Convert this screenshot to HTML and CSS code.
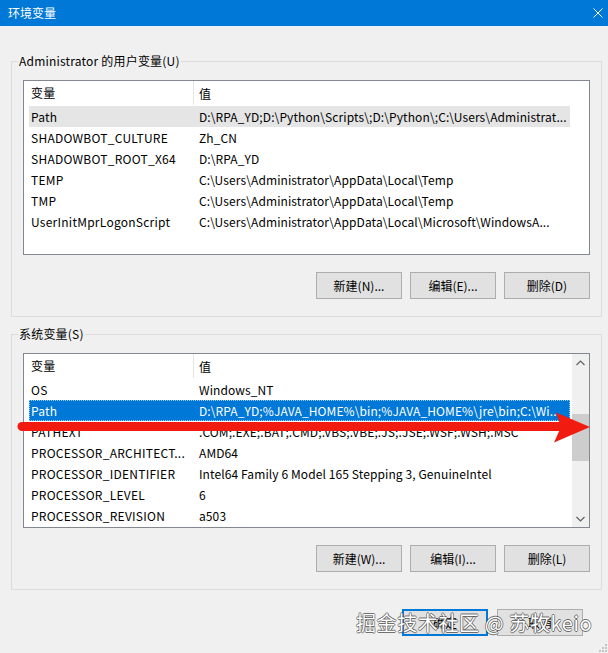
FILE: index.html
```html
<!DOCTYPE html>
<html lang="zh-CN">
<head>
<meta charset="utf-8">
<title>环境变量</title>
<link rel="stylesheet" href="styles.css">
</head>
<body>
<div class="window">
  <div class="titlebar">
    <span class="title">环境变量</span>
    <svg class="close" width="10" height="10" viewBox="0 0 10 10"><path d="M0.5 0.5 L9.5 9.5 M9.5 0.5 L0.5 9.5" stroke="#fff" stroke-width="1" fill="none"/></svg>
  </div>
  <div class="content">
    <fieldset class="group">
      <legend>Administrator 的用户变量(U)</legend>
      <div class="list">
        <div class="list-main">
          <div class="row head"><div class="c1">变量</div><div class="c2">值</div></div>
          <div class="row inactive"><div class="c1">Path</div><div class="c2">D:\RPA_YD;D:\Python\Scripts\;D:\Python\;C:\Users\Administrat...</div></div>
          <div class="row"><div class="c1">SHADOWBOT_CULTURE</div><div class="c2">Zh_CN</div></div>
          <div class="row"><div class="c1">SHADOWBOT_ROOT_X64</div><div class="c2">D:\RPA_YD</div></div>
          <div class="row"><div class="c1">TEMP</div><div class="c2">C:\Users\Administrator\AppData\Local\Temp</div></div>
          <div class="row"><div class="c1">TMP</div><div class="c2">C:\Users\Administrator\AppData\Local\Temp</div></div>
          <div class="row"><div class="c1">UserInitMprLogonScript</div><div class="c2">C:\Users\Administrator\AppData\Local\Microsoft\WindowsA...</div></div>
        </div>
      </div>
      <div class="buttons">
        <button class="btn">新建(N)...</button>
        <button class="btn">编辑(E)...</button>
        <button class="btn">删除(D)</button>
      </div>
    </fieldset>

    <fieldset class="group second">
      <legend>系统变量(S)</legend>
      <div class="list">
        <div class="list-main">
          <div class="row head"><div class="c1">变量</div><div class="c2">值</div></div>
          <div class="row"><div class="c1">OS</div><div class="c2">Windows_NT</div></div>
          <div class="row selected"><div class="c1">Path</div><div class="c2">D:\RPA_YD;%JAVA_HOME%\bin;%JAVA_HOME%\jre\bin;C:\Wi...</div></div>
          <div class="row"><div class="c1">PATHEXT</div><div class="c2">.COM;.EXE;.BAT;.CMD;.VBS;.VBE;.JS;.JSE;.WSF;.WSH;.MSC</div></div>
          <div class="row"><div class="c1">PROCESSOR_ARCHITECT...</div><div class="c2">AMD64</div></div>
          <div class="row"><div class="c1">PROCESSOR_IDENTIFIER</div><div class="c2">Intel64 Family 6 Model 165 Stepping 3, GenuineIntel</div></div>
          <div class="row"><div class="c1">PROCESSOR_LEVEL</div><div class="c2">6</div></div>
          <div class="row"><div class="c1">PROCESSOR_REVISION</div><div class="c2">a503</div></div>
        </div>
        <div class="scrollbar">
          <div class="sb-btn"><svg width="9" height="6" viewBox="0 0 9 6"><path d="M0.5 5 L4.5 1 L8.5 5" stroke="#606060" stroke-width="1.2" fill="none"/></svg></div>
          <div class="sb-gap"></div>
          <div class="sb-thumb"></div>
          <div class="sb-rest"></div>
          <div class="sb-btn"><svg width="9" height="6" viewBox="0 0 9 6"><path d="M0.5 1 L4.5 5 L8.5 1" stroke="#606060" stroke-width="1.2" fill="none"/></svg></div>
        </div>
      </div>
      <div class="buttons">
        <button class="btn">新建(W)...</button>
        <button class="btn">编辑(I)...</button>
        <button class="btn">删除(L)</button>
      </div>
    </fieldset>

    <div class="dialog-buttons">
      <button class="btn default">确定</button>
      <button class="btn">取消</button>
    </div>
  </div>

  <div class="watermark">掘金技术社区 @ 苏牧keio</div>

  <svg class="arrow" width="608" height="653" viewBox="0 0 608 653">
    <path d="M22 426.5 L560 426.5" stroke="#f21b0f" stroke-width="9" stroke-linecap="round" fill="none"/>
    <path d="M556 412.5 L590 427 L554 442.5 L561 427 Z" fill="#f21b0f"/>
  </svg>

  <svg class="grip" width="8" height="8" viewBox="0 0 8 8">
    <rect x="6" y="0" width="2" height="2" fill="#c4c4c4"/>
    <rect x="3" y="3" width="2" height="2" fill="#c4c4c4"/>
    <rect x="6" y="3" width="2" height="2" fill="#c4c4c4"/>
    <rect x="0" y="6" width="2" height="2" fill="#c4c4c4"/>
    <rect x="3" y="6" width="2" height="2" fill="#c4c4c4"/>
    <rect x="6" y="6" width="2" height="2" fill="#c4c4c4"/>
  </svg>
</div>
</body>
</html>
```

FILE: styles.css
```css
* { box-sizing: border-box; }

body {
  margin: 0;
  background: #f0f0f0;
  font-family: "Noto Sans CJK SC", "Noto Sans", sans-serif;
  font-size: 12px;
  color: #000;
}

.window {
  position: relative;
  width: 608px;
  height: 653px;
  overflow: hidden;
  background: #f0f0f0;
}

.titlebar {
  height: 26px;
  background: #0078d7;
  color: #fff;
  display: flex;
  align-items: center;
  justify-content: space-between;
  padding: 0 5px 0 8px;
}

.title {
  font-size: 12px;
  line-height: 16px;
}

.content {
  padding: 27px 6px 0 11px;
}

.group {
  margin: 0;
  border: 1px solid #dcdcdc;
  padding: 0 11px 17px 11px;
  min-width: 0;
}

.group.second {
  margin-top: 9px;
}

.group legend {
  padding: 0 1px;
  margin-left: -5px;
  line-height: 16px;
  height: 16px;
  font-size: 12px;
  color: #000;
  letter-spacing: 0.2px;
}

.list {
  margin-top: 11px;
  height: 175px;
  border: 1px solid #828790;
  background: #fff;
  display: flex;
}

.list-main {
  flex: 1;
  min-width: 0;
  overflow: hidden;
}

.row {
  display: flex;
  align-items: center;
  height: 21px;
  width: 541px;
  margin-left: 5px;
  white-space: nowrap;
  letter-spacing: 0.25px;
}

.row.head {
  height: 24px;
  margin-bottom: 1px;
}

.c1 {
  width: 167px;
  flex: none;
  padding: 0 2px 0 2px;
  overflow: hidden;
  white-space: nowrap;
}

.c2 {
  flex: 1;
  min-width: 0;
  padding: 0 0 0 3px;
  overflow: hidden;
  white-space: nowrap;
  letter-spacing: 0.1px;
}

.head .c1 {
  width: 165px;
  height: 24px;
  line-height: 24px;
  border-right: 1px solid #e5e5e5;
}

.head .c2 {
  padding-left: 5px;
}

.row.inactive {
  background: #e5e5e5;
}

.row.selected {
  background: #0078d7;
  color: #fff;
  outline: 1px dotted #9cc8ee;
  outline-offset: -1px;
}

.scrollbar {
  width: 17px;
  flex: none;
  background: #f0f0f0;
  display: flex;
  flex-direction: column;
}

.sb-btn {
  height: 17px;
  display: flex;
  align-items: center;
  justify-content: center;
}

.sb-gap { height: 43px; }

.sb-thumb {
  height: 47px;
  background: #cdcdcd;
}

.sb-rest { flex: 1; }

.buttons {
  display: flex;
  justify-content: flex-end;
  gap: 8px;
  margin-top: 17px;
}

.btn {
  width: 86px;
  height: 27px;
  padding: 0;
  border: 1px solid #adadad;
  background: #e1e1e1;
  font-family: "Noto Sans CJK SC", "Noto Sans", sans-serif;
  font-size: 12px;
  color: #000;
}

.btn.default {
  border-color: #0078d7;
  box-shadow: inset 0 0 0 1px #0078d7;
}

.dialog-buttons {
  display: flex;
  justify-content: flex-end;
  gap: 9px;
  margin-top: 19px;
  margin-right: 19px;
}

.watermark {
  position: absolute;
  left: 356px;
  top: 608px;
  font-family: "Noto Sans CJK SC", sans-serif;
  font-size: 20px;
  font-weight: 400;
  line-height: 30px;
  color: #fff;
  text-shadow: 0.8px 0 rgba(70, 70, 70, 0.75), -0.8px 0 rgba(70, 70, 70, 0.75), 0 0.8px rgba(70, 70, 70, 0.75), 0 -0.8px rgba(70, 70, 70, 0.75);
  white-space: nowrap;
  letter-spacing: 0.6px;
}

.arrow {
  position: absolute;
  left: 0;
  top: 0;
  pointer-events: none;
}

.grip {
  position: absolute;
  right: 1px;
  bottom: 1px;
}
```
